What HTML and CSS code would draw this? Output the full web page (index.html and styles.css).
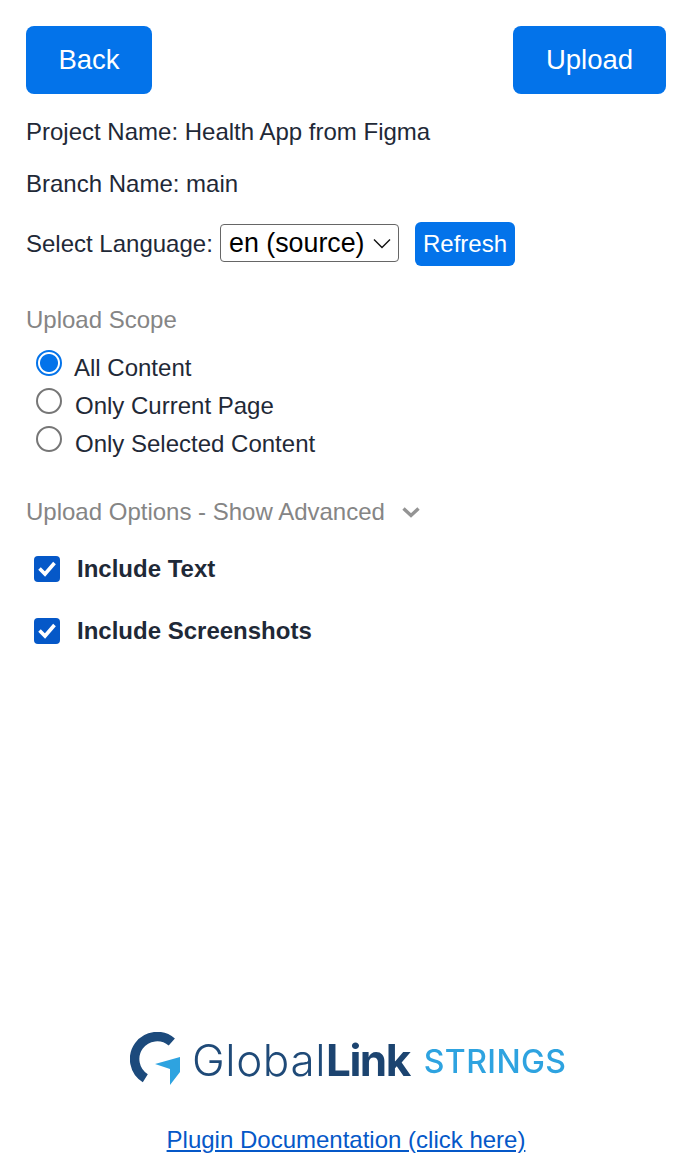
FILE: index.html
```html
<!DOCTYPE html>
<html lang="en">
<head>
<meta charset="utf-8">
<title>GlobalLink Strings</title>
<link rel="stylesheet" href="styles.css">
</head>
<body>
<main class="page">
  <div class="top-bar">
    <button class="btn btn-back">Back</button>
    <button class="btn btn-upload">Upload</button>
  </div>
  <p class="info info-project">Project Name: Health App from Figma</p>
  <p class="info info-branch">Branch Name: main</p>
  <div class="lang-row">
    <label class="lang-label" for="lang">Select Language:</label>
    <span class="select-wrap">
      <select id="lang" class="select"><option>en (source)</option></select>
      <svg class="select-arrow" viewBox="0 0 18 11" width="18" height="11"><path d="M1 1.500 9 9.500l8-8" fill="none" stroke="#111" stroke-width="1.400"/></svg>
    </span>
    <button class="btn-refresh">Refresh</button>
  </div>
  <h2 class="section section-scope">Upload Scope</h2>
  <div class="radios">
    <label class="radio-row"><input class="radio" type="radio" name="scope" checked><span class="radio-text first">All Content</span></label>
    <label class="radio-row"><input class="radio" type="radio" name="scope"><span class="radio-text">Only Current Page</span></label>
    <label class="radio-row"><input class="radio" type="radio" name="scope"><span class="radio-text">Only Selected Content</span></label>
  </div>
  <div class="section section-options">
    <span>Upload Options - Show Advanced</span>
    <svg class="chevron" viewBox="0 0 20 12" width="20" height="12"><path d="M2.500 2.500 10 9.500l7.500-7" fill="none" stroke="#949494" stroke-width="3.400"/></svg>
  </div>
  <label class="check-row check-first">
    <span class="check"><svg viewBox="0 0 26 26" width="26" height="26"><path d="M5.500 12.500l5.500 5.500 9.500-11" fill="none" stroke="#fff" stroke-width="3.600"/></svg></span>
    <span class="check-text">Include Text</span>
  </label>
  <label class="check-row check-second">
    <span class="check"><svg viewBox="0 0 26 26" width="26" height="26"><path d="M5.500 12.500l5.500 5.500 9.500-11" fill="none" stroke="#fff" stroke-width="3.600"/></svg></span>
    <span class="check-text">Include Screenshots</span>
  </label>
  <div class="spacer"></div>
  <div class="logo">
    <svg class="logo-mark" viewBox="0 0 51 54" width="51" height="54">
      <path d="M41.800 10A22.500 22.500 0 1 0 15.300 46.200" fill="none" stroke="#1c4a7c" stroke-width="9.500"/>
      <path d="M25 32 50 25V40L40 53V37Z" fill="#2ea3e0"/>
    </svg>
    <span class="logo-global">Global</span><span class="logo-link">Link</span><span class="logo-strings">STRINGS</span>
  </div>
  <div class="doc"><a class="doc-link" href="#">Plugin Documentation (click here)</a></div>
</main>
</body>
</html>
```
FILE: styles.css
```css
* { box-sizing: border-box; }
html, body { margin: 0; height: 100%; }
body { background: #fff; color: #1f2937; font-family: "Liberation Sans", Arial, sans-serif; font-size: 24px; }
.page { height: 1164px; padding: 26px 28px 0 26px; display: flex; flex-direction: column; }
.top-bar { display: flex; justify-content: space-between; }
.btn { height: 68px; border: 0; border-radius: 8px; background: #0373ea; color: #fff; font: 27.500px "Liberation Sans", Arial, sans-serif; padding: 0; }
.btn-back { width: 126px; }
.btn-upload { width: 153px; }
.info { margin: 0; line-height: 28px; }
.info-project { margin-top: 24px; }
.info-branch { margin-top: 24px; }
.lang-row { display: flex; align-items: center; margin-top: 24px; height: 44px; }
.lang-label { width: 194px; }
.select-wrap { position: relative; display: block; width: 179px; height: 38px; margin-top: -2px; }
.select { appearance: none; -webkit-appearance: none; width: 100%; height: 100%; padding: 0 0 0 8px; border: 1.500px solid #666; border-radius: 4px; background: #fff; color: #000; font: 26.800px "Liberation Sans", Arial, sans-serif; }
.select-arrow { position: absolute; right: 8px; top: 14px; pointer-events: none; }
.btn-refresh { width: 100px; height: 44px; margin-left: 16px; border: 0; border-radius: 6px; background: #0373ea; color: #fff; font: 24px "Liberation Sans", Arial, sans-serif; padding: 0; }
.section { margin: 0; font-weight: 400; font-size: 24px; line-height: 28px; color: #858585; }
.section-scope { margin-top: 40px; }
.radios { display: flex; flex-direction: column; margin-top: 16px; padding-left: 10px; }
.radio-row { display: flex; align-items: flex-start; height: 38px; }
.radio { appearance: none; -webkit-appearance: none; width: 26px; height: 26px; margin: 0; border: 2px solid #767676; border-radius: 50%; background: #fff; }
.radio:checked { border-color: #0373ea; background: radial-gradient(circle, #0373ea 0 8.500px, #fff 9.500px); }
.radio-text { margin: 4px 0 0 13px; line-height: 28px; }
.radio-text.first { margin-left: 12px; }
.section-options { display: flex; align-items: center; gap: 16px; margin-top: 34px; }
.check-row { display: flex; align-items: center; height: 28px; padding-left: 8px; font-weight: 700; }
.check-first { margin-top: 29px; }
.check-second { margin-top: 34px; }
.check { display: block; width: 26px; height: 26px; border-radius: 4px; background: #0558c8; }
.check svg { display: block; }
.check-text { margin-left: 17px; }
.spacer { flex: 1; }
.logo { display: flex; align-items: flex-start; justify-content: flex-start; height: 56px; padding-left: 104px; filter: blur(0.500px); }
.logo-mark { flex: none; margin-right: 11px; }
.logo-global, .logo-link, .logo-strings { font-family: Inter, sans-serif; }
.logo-global { margin-top: -2px; line-height: 60px; font-weight: 300; font-size: 44px; color: #1f4a78; letter-spacing: 0.600px; }
.logo-link { margin-top: -2px; line-height: 60px; font-weight: 700; font-size: 44px; color: #1c4470; letter-spacing: -1.500px; }
.logo-strings { margin: -2px 0 0 14px; line-height: 64px; font-weight: 500; font-size: 32px; color: #2ea3e0; letter-spacing: 0.400px; }
.doc { margin-top: 38px; margin-bottom: 10px; text-align: center; line-height: 28px; }
.doc-link { color: #0558c8; }
```
